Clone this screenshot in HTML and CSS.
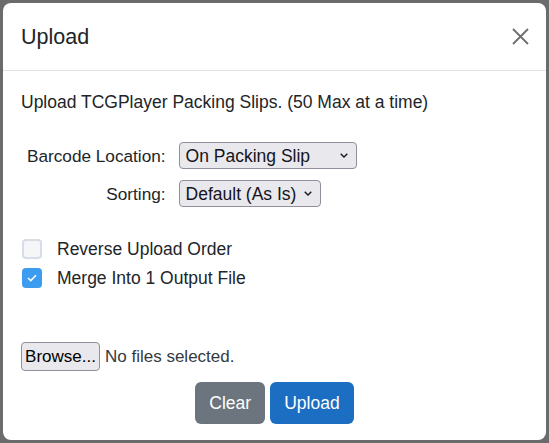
FILE: index.html
```html
<!DOCTYPE html>
<html lang="en">
  <head>
    <meta charset="UTF-8" />
    <meta name="viewport" content="width=device-width, initial-scale=1.0" />
    <title>Upload</title>
    <link rel="stylesheet" href="styles.css">
  </head>
  <body>
    <div class="modal">
      <div class="modal-header">
        <h5 class="modal-title">Upload</h5>
        <button class="close-btn" aria-label="Close">
          <svg width="17" height="17" viewBox="0 0 17 17">
            <path d="M1 1 L16 16 M16 1 L1 16" stroke="#6e6e6e" stroke-width="1.8" fill="none" />
          </svg>
        </button>
      </div>

      <div class="modal-body">
        <p class="intro">Upload TCGPlayer Packing Slips. (50 Max at a time)</p>

        <div class="options">
          <label for="barcode">Barcode Location:</label>
          <select id="barcode" class="select select-wide">
            <option>On Packing Slip</option>
            <option>On Separate Page</option>
          </select>

          <label for="sorting">Sorting:</label>
          <select id="sorting" class="select select-narrow">
            <option>Default (As Is)</option>
            <option>By Name</option>
          </select>
        </div>

        <div class="checks">
          <label class="check">
            <input type="checkbox" />
            <span>Reverse Upload Order</span>
          </label>
          <label class="check">
            <input type="checkbox" checked />
            <span>Merge Into 1 Output File</span>
          </label>
        </div>

        <div class="file-row">
          <button class="browse">Browse...</button>
          <span class="file-name">No files selected.</span>
        </div>

        <div class="actions">
          <button class="btn btn-secondary">Clear</button>
          <button class="btn btn-primary">Upload</button>
        </div>
      </div>
    </div>
  </body>
</html>
```

FILE: styles.css
```css
/* Reset some default styling */
* {
  margin: 0;
  padding: 0;
  box-sizing: border-box;
}

body {
  font-family: "Liberation Sans", Arial, sans-serif;
  font-size: 17.5px;
  line-height: 26px;
  color: #212529;
  background-color: #6b6b6b;
  padding: 3px;
}

/* Modal box */
.modal {
  background-color: #ffffff;
  border-radius: 8px;
  height: 437px;
  display: flex;
  flex-direction: column;
}

.modal-header {
  height: 68px;
  padding: 0 17px 0 18px;
  border-bottom: 1px solid #dee2e6;
  display: flex;
  align-items: center;
  justify-content: space-between;
}

.modal-title {
  font-size: 21.5px;
  font-weight: normal;
  line-height: 30px;
}

.close-btn {
  background: none;
  border: none;
  width: 17px;
  height: 17px;
  display: flex;
  cursor: pointer;
}

.modal-body {
  padding: 18px 18px 0 18px;
}

.intro {
  margin-bottom: 27px;
}

/* Dropdown rows */
.options {
  display: grid;
  grid-template-columns: auto auto;
  justify-content: start;
  align-items: center;
  column-gap: 13px;
  row-gap: 11px;
  padding-left: 6px;
  font-size: 17.2px;
}

.options label {
  text-align: right;
}

.select {
  appearance: none;
  font-family: inherit;
  font-size: 17.5px;
  color: #15141a;
  height: 27px;
  padding: 0 24px 0 6px;
  background-color: #e9e9ed;
  border: 1px solid #8f8f9d;
  border-radius: 4px;
  background-image: url("data:image/svg+xml,%3Csvg xmlns='http://www.w3.org/2000/svg' width='8' height='5' viewBox='0 0 8 5'%3E%3Cpath d='M0.7 0.7 L4 4 L7.3 0.7' stroke='%2315141a' stroke-width='1.3' fill='none'/%3E%3C/svg%3E");
  background-repeat: no-repeat;
  background-position: right 8px center;
}

.select-wide {
  width: 178px;
}

.select-narrow {
  width: 142px;
}

/* Checkboxes */
.checks {
  margin-top: 27px;
  display: flex;
  flex-direction: column;
}

.check {
  height: 29px;
  display: flex;
  align-items: center;
  gap: 15px;
  padding-left: 1px;
}

.check input {
  appearance: none;
  width: 20px;
  height: 20px;
  border: 2px solid #d6dde6;
  background-color: #f4f6f8;
  border-radius: 4px;
  display: block;
}

.check input:checked {
  background-color: #3b9cf0;
  border-color: #3b9cf0;
  background-image: url("data:image/svg+xml,%3Csvg xmlns='http://www.w3.org/2000/svg' width='10' height='8' viewBox='0 0 10 8'%3E%3Cpath d='M1 4 L3.8 6.6 L9 1.2' stroke='white' stroke-width='1.6' fill='none'/%3E%3C/svg%3E");
  background-repeat: no-repeat;
  background-position: center;
}

/* File picker */
.file-row {
  margin-top: 50px;
  display: flex;
  align-items: center;
  gap: 5px;
}

.browse {
  font-family: inherit;
  font-size: 17px;
  color: #000;
  width: 79px;
  height: 29px;
  padding: 0;
  background-color: #e9e9ed;
  border: 1px solid #8f8f9d;
  border-radius: 4px;
}

.file-name {
  color: #343a40;
  font-size: 17px;
}

/* Footer buttons */
.actions {
  margin-top: 11px;
  display: flex;
  justify-content: center;
  gap: 5px;
}

.btn {
  font-family: inherit;
  font-size: 17.5px;
  line-height: 26px;
  color: #ffffff;
  padding: 7px 13px;
  border: 1px solid transparent;
  border-radius: 6px;
  cursor: pointer;
}

.btn-secondary {
  background-color: #6c757d;
}

.btn-primary {
  background-color: #1b6ec2;
}
```
